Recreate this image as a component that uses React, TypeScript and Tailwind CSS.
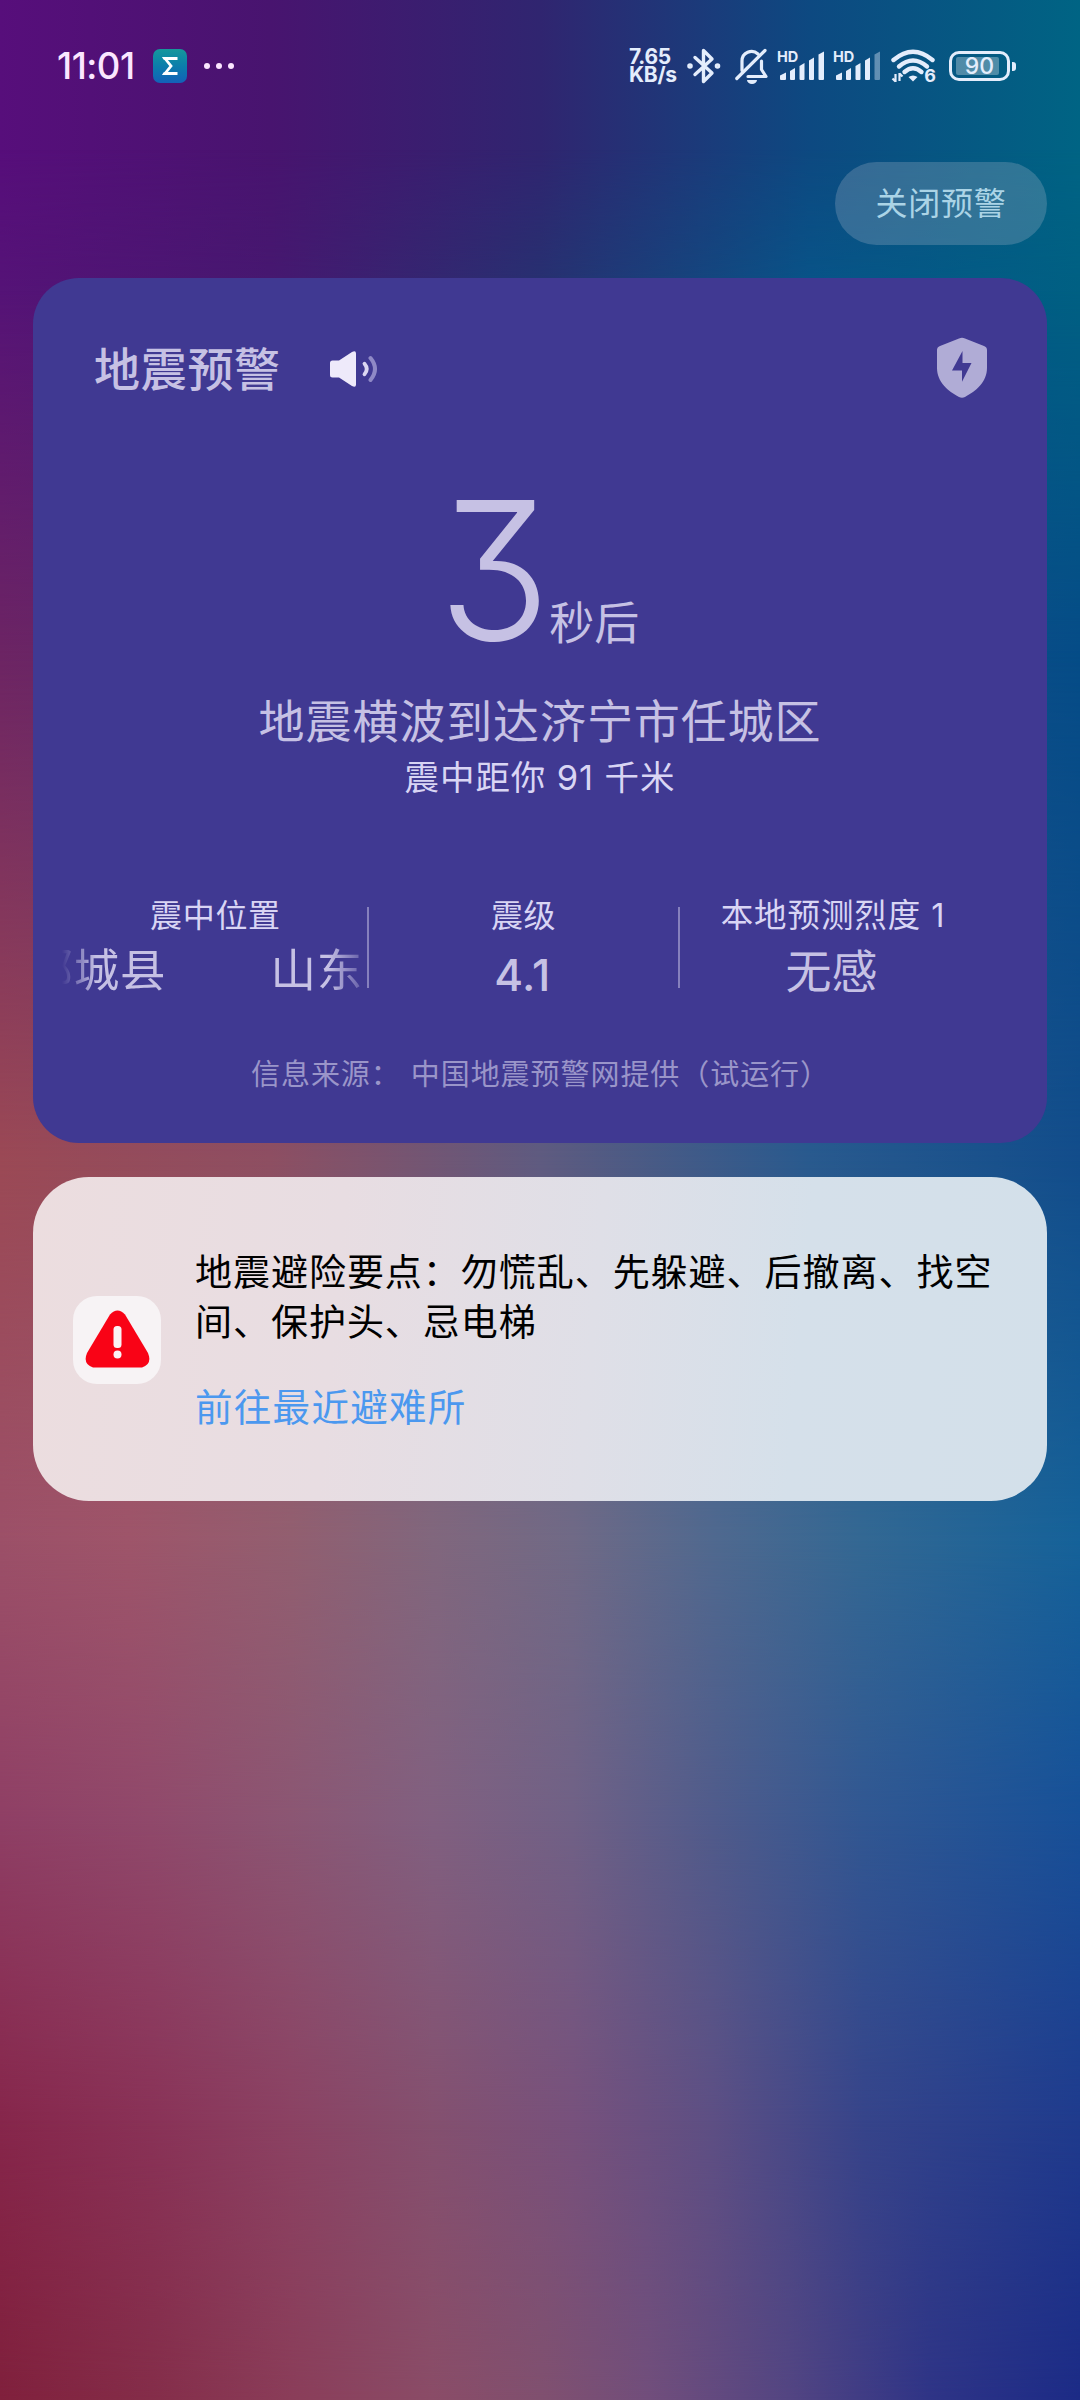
import React from 'react';

const SANS = "font-['Inter','Noto_Sans_CJK_SC',sans-serif]";

// Each layer is a horizontal gradient that fades in vertically over the previous one.
function Wallpaper() {
  return (
    <div className="absolute inset-0 -z-10 bg-[linear-gradient(90deg,#570e7b,#48146f_25%,#302570_50%,#0d4981_75%,#006484)]">
      <div className="absolute inset-0 bg-[linear-gradient(90deg,#551377,#461870_25%,#273171_50%,#085488_75%,#006083)] mask-[linear-gradient(180deg,transparent_150px,black_290px)]" />
      <div className="absolute inset-0 bg-[linear-gradient(90deg,#6c2464,#5a2a6c_25%,#3a4078_50%,#1a5088_75%,#054c87)] mask-[linear-gradient(180deg,transparent_290px,black_650px)]" />
      <div className="absolute inset-0 bg-[linear-gradient(90deg,#9b4955,#8e4f62_25%,#5f5b80_50%,#295a8e_75%,#124d8b)] mask-[linear-gradient(180deg,transparent_650px,black_1160px)]" />
      <div className="absolute inset-0 bg-[linear-gradient(90deg,#9c5068,#9e556a_12%,#925f70_27%,#81677d_40%,#706a86_53%,#50698f_66%,#336893_80%,#156299)] mask-[linear-gradient(180deg,transparent_1160px,black_1540px)]" />
      <div className="absolute inset-0 bg-[linear-gradient(90deg,#8f3f65,#90496b_14%,#8b5673_27%,#816080_40%,#706186_53%,#505b8b_66%,#315792_80%,#175098)] mask-[linear-gradient(180deg,transparent_1540px,black_1820px)]" />
      <div className="absolute inset-0 bg-[linear-gradient(90deg,#86264b,#893257_14%,#8b4263_27%,#84506f_40%,#77517c_53%,#5d4f84_66%,#36448a_80%,#1f3b8d)] mask-[linear-gradient(180deg,transparent_1820px,black_2120px)]" />
      <div className="absolute inset-0 bg-[linear-gradient(90deg,#80203c,#842d49_14%,#8a3d59_27%,#8a4c67_40%,#80506f_50%,#714e7b_60%,#534582_73%,#2f3486_86%,#1c2b86)] mask-[linear-gradient(180deg,transparent_2120px,black_2400px)]" />
    </div>
  );
}

function Bluetooth() {
  return (
    <svg className="h-[38px] w-[34px]" viewBox="0 0 34 38" fill="none" stroke="currentColor" strokeWidth="3.4" strokeLinejoin="round" strokeLinecap="round">
      <path d="M8 10.500L25 26l-8.500 8.500V3.500L25 12 8 27.500" />
      <circle cx="3" cy="19" r="1.300" strokeWidth="3" />
      <circle cx="30.500" cy="19" r="1.300" strokeWidth="3" />
    </svg>
  );
}

function BellOff() {
  return (
    <svg className="h-[38px] w-[34px]" viewBox="0 0 34 38" fill="none" stroke="currentColor" strokeWidth="3.200" strokeLinejoin="round" strokeLinecap="round">
      <path d="M7 23.500V14a9.500 9.500 0 0 1 16-7" />
      <path d="M26.500 14v8.500l4.500 7H13" />
      <path d="M1.800 31.500L30 3.500" />
      <path d="M12 33h10a5 4 0 0 1-10 0z" fill="currentColor" stroke="none" />
    </svg>
  );
}

function Signal({ weak }: { weak?: boolean }) {
  return (
    <div className="relative h-[34px] w-[48px]">
      <span className="absolute left-[-1px] top-[1px] text-[14.500px] font-bold leading-[14px]">HD</span>
      <svg className="absolute left-[2px] top-[2px] h-[30px] w-[46px]" viewBox="0 0 46 30" fill="currentColor">
        <path d="M0 28v-3.500l6-3V28q0 1-1 1H1q-1 0-1-1z" />
        <path d="M10 28V20l5-3v11q0 1-1 1h-3q-1 0-1-1z" />
        <path d="M19.500 28V15l5-3v16q0 1-1 1h-3q-1 0-1-1z" />
        <path d="M29 28V9.500l5-3V28q0 1-1 1h-3q-1 0-1-1z" />
        <path d="M38.500 28V3.500l5.500-3V28q0 1-1 1h-3.500q-1 0-1-1z" opacity={weak ? 0.4 : 1} />
      </svg>
    </div>
  );
}

function Wifi() {
  return (
    <div className="relative h-[34px] w-[46px]">
      <svg className="h-[34px] w-[46px]" viewBox="0 0 46 34" fill="none" stroke="currentColor" strokeWidth="4.400">
        <path d="M2.500 11Q22 -5.500 41.500 11" strokeLinecap="round" />
        <path d="M8 17.500Q22 5.500 36 17.500" strokeLinecap="round" />
        <path d="M13.500 23Q22 15.500 30.500 23" strokeLinecap="round" />
        <path d="M17.500 28Q22 25 26.500 28L22 32.500z" fill="currentColor" stroke="none" />
        <path d="M4.500 33V25M8.500 24v8M4.500 32.500L1.500 29.500M8.500 24.500L11.500 27.500" strokeWidth="2.200" />
      </svg>
      <span className="absolute bottom-[-1px] right-[1px] text-[18px] font-bold leading-[17px]">6</span>
    </div>
  );
}

function StatusBar() {
  return (
    <header className="flex h-[132px] items-center pl-[57px] pr-[64px] text-[#e4edfc]">
      <time className="w-[80px] whitespace-nowrap text-[36.500px] font-medium leading-none tracking-[-0.5px] text-[#fbe6ff]">11:01</time>
      <span className="ml-[16px] flex size-[34px] items-center justify-center rounded-[7px] bg-linear-to-b from-[#16989b] to-[#1460b8] text-white">
        <svg className="size-[20px]" viewBox="0 0 20 20" fill="none" stroke="currentColor" strokeWidth="2.800">
          <path d="M17.500 2.500H5l6 7.500-6 7.500h12.500" />
          <path d="M2 1.200H8L4 4zM2 18.800H8L4 16z" fill="currentColor" stroke="none" />
        </svg>
      </span>
      <span className="ml-[17px] flex gap-[6px]">
        <i className="size-[6px] rounded-full bg-[#fbe6ff]" />
        <i className="size-[6px] rounded-full bg-[#fbe6ff]" />
        <i className="size-[6px] rounded-full bg-[#fbe6ff]" />
      </span>
      <div className="ml-auto flex items-center">
        <div className="w-[58px] whitespace-nowrap text-[21px] font-bold leading-[18px] tracking-[-0.3px]">
          <div>7.65</div>
          <div>KB/s</div>
        </div>
        <Bluetooth />
        <span className="w-[14px]" />
        <BellOff />
        <span className="w-[9px]" />
        <Signal />
        <span className="w-[8px]" />
        <Signal weak />
        <span className="w-[9px]" />
        <Wifi />
        <span className="w-[12px]" />
        <div className="flex h-[30px] w-[61px] items-center rounded-[10px] border-[3px] border-current px-[4px]">
          <div className="relative h-[18px] w-full">
            <div className="h-[18px] w-[43px] rounded-[2px] bg-white/30" />
            <span className="absolute inset-0 text-center text-[23px] font-medium leading-[19px]">90</span>
          </div>
        </div>
        <i className="ml-[2px] h-[9px] w-[4px] rounded-r-[3px] bg-current" />
      </div>
    </header>
  );
}

function Speaker() {
  return (
    <svg className="h-[38px] w-[52px]" viewBox="0 0 52 38" fill="none">
      <path d="M3.500 10.500H10L23 2q4-2 4 1.500v31q0 3.500-4 1.500L10 27.500H3.500q-2.500 0-2.500-2.500V13q0-2.500 2.500-2.500z" fill="#eeeafa" />
      <path d="M35.500 13.800q4.500 5.200 0 10.400" stroke="#dcd7f2" strokeWidth="3.800" strokeLinecap="round" />
      <path d="M41.500 8q9 11 0 22" stroke="#8f89c6" strokeWidth="4" strokeLinecap="round" />
    </svg>
  );
}

function Shield() {
  return (
    <svg className="h-[62px] w-[52px]" viewBox="0 0 52 62">
      <path
        fillRule="evenodd"
        fill="#b0acd6"
        d="M23 1.500q3-1.500 6 0l19 7.500q3 1.200 3 4V31C51 45 40 54 29 60q-3 1.500-6 0C12 54 1 45 1 31V13q0-2.800 3-4zM26.500 14L16 33.500h10v11.300l9.500-18.800H26.500z"
      />
    </svg>
  );
}

function AlertCard() {
  return (
    <section className="h-[865px] rounded-[46px] bg-[#403992] pt-[60px] text-[#c6c1e4]">
      <div className="flex h-[62px] items-center pl-[61px] pr-[59px]">
        <h1 className="text-[46px] font-medium leading-none tracking-[0.700px]">地震预警</h1>
        <span className="ml-[48px]">
          <Speaker />
        </span>
        <span className="mb-[3px] ml-auto">
          <Shield />
        </span>
      </div>

      <div className="mt-[70px] flex h-[200px] items-baseline justify-center pr-[3px]">
        <span className="inline-block origin-left scale-x-[0.96] text-[193px] font-light leading-[200px] tracking-[-8px] [font-feature-settings:'cv09']">3</span>
        <span className="ml-[2px] text-[45px] leading-none">秒后</span>
      </div>

      <p className="mt-[21px] text-center text-[46px] leading-[60px] tracking-[0.900px]">地震横波到达济宁市任城区</p>
      <p className="text-center text-[34.500px] leading-[54px] tracking-[0.900px] text-[#d9d5f4]">震中距你 91 千米</p>

      <div className="mt-[88px] flex h-[94px]">
        <div className="w-[334px] pl-[29px]">
          <div className="pl-[88px] text-[32px] leading-[46px] tracking-[0.700px] text-[#d9d5f4]">震中位置</div>
          <div className="flex w-[301px] justify-end overflow-hidden whitespace-nowrap text-[45.500px] leading-[64px] tracking-[0.800px] mask-[linear-gradient(90deg,transparent,black_34px,black_266px,transparent_104%)]">
            <span>郯城县</span>
            <span className="ml-[104px]">山东</span>
          </div>
        </div>
        <i className="mt-[14px] h-[81px] w-[2px] bg-[#8680bd]" />
        <div className="w-[309px] text-center">
          <div className="text-[32px] leading-[46px] tracking-[0.400px] text-[#d9d5f4]">震级</div>
          <div className="-ml-[2px] pt-[5px] text-[44px] font-medium leading-[62px] tracking-[0.500px]">4.1</div>
        </div>
        <i className="mt-[14px] h-[81px] w-[2px] bg-[#8680bd]" />
        <div className="w-[306px] text-center">
          <div className="text-[32.500px] leading-[46px] tracking-[0.900px] text-[#d9d5f4]">本地预测烈度 1</div>
          <div className="-ml-[3px] text-[46px] leading-[64px]">无感</div>
        </div>
      </div>

      <p className="mt-[68px] pl-[218px] text-[29px] leading-[40px] tracking-[0.940px] text-[#9a95c9]">
        信息来源： <span className="ml-[1px]">中国地震预警网提供（试运行）</span>
      </p>
    </section>
  );
}

function TipsCard() {
  return (
    <section className="mt-[34px] flex h-[324px] items-center rounded-[56px] bg-[linear-gradient(95deg,#ecdddf,#e8dde2_30%,#dfdfe7_55%,#d5e0ea_75%,#d3e0ea)] pl-[40px] pr-[46px]">
      <span className="mt-[2px] flex size-[88px] shrink-0 items-center justify-center rounded-[24px] bg-[#f7f3f5]">
        <svg className="mb-[3px] h-[58px] w-[65px]" viewBox="0 0 65 58">
          <path d="M25 4.500Q32.500-3.500 40 4.500L63 43Q67.500 54 57 57.500H8Q-2.500 54 2 43z" fill="#f90316" />
          <rect x="28.500" y="16" width="8" height="22" rx="3.500" fill="#fbf3f5" />
          <circle cx="32.500" cy="44.500" r="4" fill="#fbf3f5" />
        </svg>
      </span>
      <div className="ml-[34px] pt-[4px]">
        <p className="whitespace-nowrap text-[37px] leading-[50.500px] tracking-[0.970px] text-black">
          地震避险要点：勿慌乱、先躲避、后撤离、找空
          <br />
          间、保护头、忌电梯
        </p>
        <a className="mt-[32px] block text-[37.500px] leading-[54px] tracking-[1.300px] text-[#4b98ef]">前往最近避难所</a>
      </div>
    </section>
  );
}

export default function App() {
  return (
    <div className={`relative isolate h-[2400px] w-[1080px] overflow-hidden ${SANS}`} lang="zh-CN">
      <Wallpaper />
      <StatusBar />
      <main className="px-[33px]">
        <div className="flex h-[146px] justify-end pt-[30px]">
          <button className="flex h-[83px] w-[212px] items-center justify-center rounded-full bg-[#aeb8cc]/27 text-[32px] leading-none tracking-[0.800px] text-[#abd4e6]">
            关闭预警
          </button>
        </div>
        <AlertCard />
        <TipsCard />
      </main>
    </div>
  );
}
